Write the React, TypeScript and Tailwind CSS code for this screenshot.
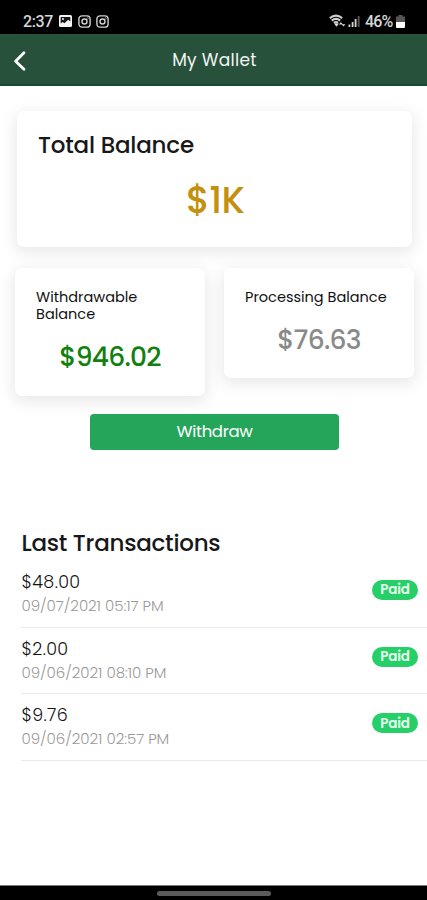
const transactions = [
  { amount: '$48.00', date: '09/07/2021 05:17 PM' },
  { amount: '$2.00', date: '09/06/2021 08:10 PM' },
  { amount: '$9.76', date: '09/06/2021 02:57 PM' },
];

const cardStyle = 'rounded-[7px] bg-white shadow-[0_4px_16px_2px_rgba(0,0,0,0.09)]';

function CameraIcon() {
  return (
    <svg className="h-[13px] w-[13px]" viewBox="0 0 13 13" fill="none" stroke="#d0d0d0" strokeWidth="1.4">
      <rect x="0.9" y="0.9" width="11.2" height="11.2" rx="3.2" />
      <circle cx="6.5" cy="6.5" r="2.5" />
      <circle cx="9.6" cy="3.4" r="0.2" />
    </svg>
  );
}

function StatusBar() {
  return (
    <div className="flex h-[34px] shrink-0 items-center justify-between bg-black pt-[8px] pr-[22px] pl-[23px] font-[Roboto,sans-serif] text-[16px] font-medium text-[#d6d6d6]">
      <div className="flex items-center">
        <span className="w-[36px] pt-px leading-none tracking-[-0.4px] whitespace-nowrap">2:37</span>
        <svg className="h-[12px] w-[13px]" viewBox="0 0 13 12">
          <rect width="13" height="12" rx="1.5" fill="#f4f4f4" />
          <path d="M1.7 2h9.6v4.5L9.2 4.8 5.4 8.2 3.7 6.9 1.7 8.5Z" fill="#161616" />
          <circle cx="4" cy="4" r="1" fill="#f4f4f4" />
        </svg>
        <div className="ml-[6px] flex gap-[5px]">
          <CameraIcon />
          <CameraIcon />
        </div>
      </div>
      <div className="flex items-center">
        <svg className="h-[14px] w-[32px]" viewBox="0 0 32 14" fill="none">
          <path d="M.8 4.1Q7 -.8 13.2 4.1M2.8 6.6Q7 3.2 11.2 6.6M4.9 8.9Q7 7.3 9 8.9" stroke="#cfcfcf" strokeWidth="2" />
          <path d="m5 9.4 2.5 3.4 2.5-3.2ZM10 10.4l1.9-2.4 1.9 2.4ZM12.6 10.2h3.8l-1.9 2.4Z" fill="#ddd" />
          <path d="M19.5 10.5h1.8V13h-1.8ZM22.7 8h1.8v5h-1.8ZM25.7 5h1.8v8h-1.8Z" fill="#d4d4d4" />
          <path d="M28.7 2h1.9v11h-1.9Z" fill="#555" />
        </svg>
        <span className="ml-[4px] w-[31px] pt-px leading-none tracking-[-0.8px] whitespace-nowrap">46%</span>
        <svg className="h-[13px] w-[9px]" viewBox="0 0 9 13">
          <path d="M2.5 0h4v1.5H9V7H0V1.5h2.5Z" fill="#555" />
          <path d="M0 7h9v5q0 1-1 1H1q-1 0-1-1Z" fill="#fff" />
        </svg>
      </div>
    </div>
  );
}

export default function App() {
  return (
    <div className="flex h-[900px] w-[427px] flex-col overflow-hidden bg-white font-[Poppins,Inter,sans-serif]">
      <StatusBar />
      <header className="grid h-[52px] shrink-0 grid-cols-[60px_1fr_60px] items-center border-b-2 border-[#174a32] bg-[#28513c]">
        <svg className="mt-[3px] ml-[13px] h-[22px] w-[14px]" viewBox="0 0 14 22" fill="none" stroke="#fff" strokeWidth="2.8" strokeLinecap="round" strokeLinejoin="round">
          <path d="M11 2.8 2.6 11.2l8.4 8" />
        </svg>
        <h1 className="pt-[3px] pl-[2px] text-center text-[17px] tracking-[0.3px] whitespace-nowrap text-[#f2f6f2]">My Wallet</h1>
      </header>

      <main className="flex flex-1 flex-col">
        <section className={`mt-[25px] mr-[15px] ml-[17px] h-[136px] shrink-0 px-[21px] pt-[19px] ${cardStyle}`}>
          <h2 className="text-[23px] leading-[30px] font-medium tracking-[-0.2px] whitespace-nowrap text-[#181818]">Total Balance</h2>
          <p className="mt-[16px] pl-[1px] text-center text-[37px] leading-[48px] font-medium tracking-[-0.8px] whitespace-nowrap text-[#c1910f]">$1K</p>
        </section>

        <div className="mt-[21px] mr-[13px] ml-[15px] flex h-[129px] shrink-0 items-start justify-between">
          <section className={`h-[128px] w-[190px] px-[21px] pt-[21px] ${cardStyle}`}>
            <h3 className="text-[14.5px] leading-[17px] whitespace-nowrap text-[#111]">
              <span className="block">Withdrawable</span>
              <span className="block">Balance</span>
            </h3>
            <p className="mt-[16px] text-center text-[26.5px] leading-[36px] font-medium tracking-[-0.75px] whitespace-nowrap text-[#11800f]">$946.02</p>
          </section>
          <section className={`h-[110px] w-[190px] px-[21px] pt-[21px] ${cardStyle}`}>
            <h3 className="text-[14.5px] leading-[17px] whitespace-nowrap text-[#111]">Processing Balance</h3>
            <p className="mt-[16px] text-center text-[26.5px] leading-[36px] font-medium tracking-[-0.75px] whitespace-nowrap text-[#8a8a8a]">$76.63</p>
          </section>
        </div>

        <button className="mt-[17px] ml-[90px] h-[36px] w-[249px] shrink-0 rounded-[4px] bg-[#24a55a] pt-px text-[16.5px] tracking-[-0.35px] text-white">Withdraw</button>

        <section className="mt-[78px] ml-[21px]">
          <h2 className="pl-[0.5px] text-[23px] leading-[30px] font-medium tracking-[-0.25px] whitespace-nowrap text-[#181818]">Last Transactions</h2>
          <ul className="mt-[3px]">
            {transactions.map((t) => (
              <li key={t.date} className="flex h-[66.6px] items-start justify-between border-b border-[#e9e9e9] pt-[9px] pr-[9px]">
                <div className="pl-[0.5px]">
                  <p className="text-[17.5px] leading-[24px] font-light tracking-[0.35px] whitespace-nowrap text-[#111]">{t.amount}</p>
                  <p className="pt-px text-[15px] leading-[22px] font-light tracking-[-0.04px] whitespace-nowrap text-[#999]">{t.date}</p>
                </div>
                <span className="mt-[10px] flex h-[20px] w-[46px] items-center justify-center rounded-full bg-[#26cf68] pt-px text-[13.5px] font-semibold tracking-[-0.2px] text-[#eafff1]">Paid</span>
              </li>
            ))}
          </ul>
        </section>
      </main>

      <footer className="flex h-[15px] shrink-0 justify-center border-t border-[#777] bg-black pt-[5px]">
        <div className="h-[5px] w-[114px] rounded-full bg-[#5b5b5b]" />
      </footer>
    </div>
  );
}
